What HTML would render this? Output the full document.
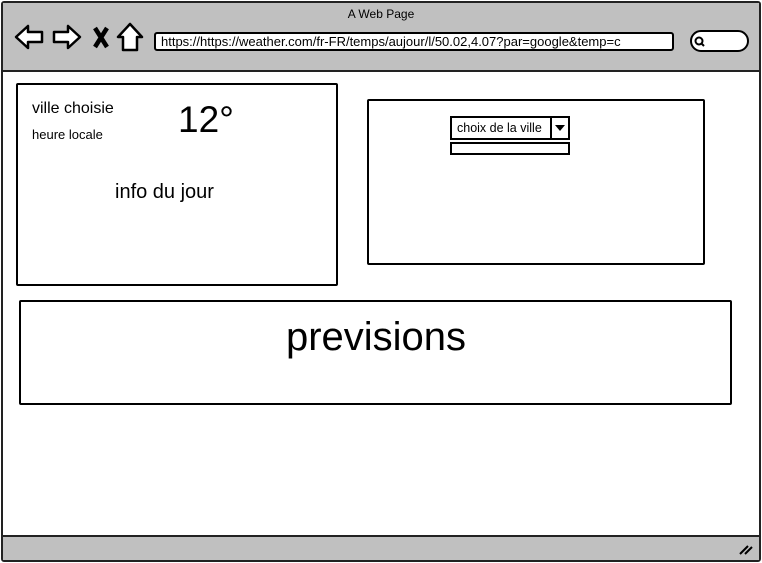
<!DOCTYPE html>
<html><head><meta charset="utf-8"><style>
*{margin:0;padding:0;box-sizing:border-box}
body{width:762px;height:563px;background:#fff;font-family:"Liberation Sans",sans-serif;position:relative;overflow:hidden;color:#000}
.a{position:absolute}
.bx{position:absolute;border:2px solid #000;border-radius:2px;background:#fff}
</style></head><body>
<div class="a" style="left:1px;top:1px;width:760px;height:561px;border:2px solid #222;border-radius:3px;background:#fff"></div>
<div class="a" style="left:3px;top:3px;width:756px;height:69px;background:#c0c0c0;border-bottom:2px solid #222"></div>
<div class="a" style="left:0;top:7px;width:762px;text-align:center;font-size:12px">A Web Page</div>
<svg class="a" style="left:12px;top:22px" width="135" height="30" viewBox="0 0 135 30">
<g fill="#fff" stroke="#000" stroke-width="2.5" stroke-linejoin="round">
<path d="M4 15 L16 4 L16 10 L30 10 L30 20 L16 20 L16 26 Z"/>
<path d="M68 15 L56 4 L56 10 L42 10 L42 20 L56 20 L56 26 Z"/>
<path d="M118 2 L106 15 L111 15 L111 28 L125 28 L125 15 L130 15 Z"/>
</g>
<path d="M83 6 L95 25 M95 6 L83 25" stroke="#000" stroke-width="4.5"/>
</svg>
<div class="a" style="left:154px;top:32px;width:520px;height:19px;border:2px solid #000;border-radius:3px;background:#fff;font-size:13px;line-height:15px;padding-left:5px">https://https://weather.com/fr-FR/temps/aujour/l/50.02,4.07?par=google&amp;temp=c</div>
<div class="a" style="left:690px;top:30px;width:59px;height:22px;border:2px solid #000;border-radius:11px;background:#fff"></div>
<svg class="a" style="left:694px;top:36px" width="12" height="12"><circle cx="5" cy="5" r="3.5" fill="none" stroke="#000" stroke-width="2"/><path d="M7 7 L10 10" stroke="#000" stroke-width="2"/></svg>
<div class="a" style="left:3px;top:535px;width:756px;height:25px;background:#c0c0c0;border-top:2px solid #222"></div>
<svg class="a" style="left:738px;top:542px" width="16" height="14"><path d="M2 12 L10 4 M7 12 L14 5" stroke="#000" stroke-width="2"/></svg>

<div class="bx" style="left:16px;top:83px;width:322px;height:203px"></div>
<div class="a" style="left:32px;top:100px;font-size:16px">ville choisie</div>
<div class="a" style="left:32px;top:127px;font-size:13px">heure locale</div>
<div class="a" style="left:178px;top:99px;font-size:37px">12°</div>
<div class="a" style="left:115px;top:181px;font-size:20px">info du jour</div>

<div class="bx" style="left:367px;top:99px;width:338px;height:166px"></div>
<div class="a" style="left:450px;top:116px;width:120px;height:24px;border:2px solid #000;background:#fff;font-size:12.5px;line-height:20px;padding-left:5px">choix de la ville</div>
<div class="a" style="left:550px;top:116px;width:20px;height:24px;border-left:2px solid #000"></div>
<svg class="a" style="left:555px;top:125px" width="10" height="6"><path d="M0 0 L10 0 L5 6 Z"/></svg>
<div class="a" style="left:450px;top:142px;width:120px;height:13px;border:2px solid #000;background:#fff"></div>

<div class="bx" style="left:19px;top:300px;width:713px;height:105px"></div>
<div class="a" style="left:0;top:315px;width:752px;text-align:center;font-size:40px">previsions</div>
</body></html>
